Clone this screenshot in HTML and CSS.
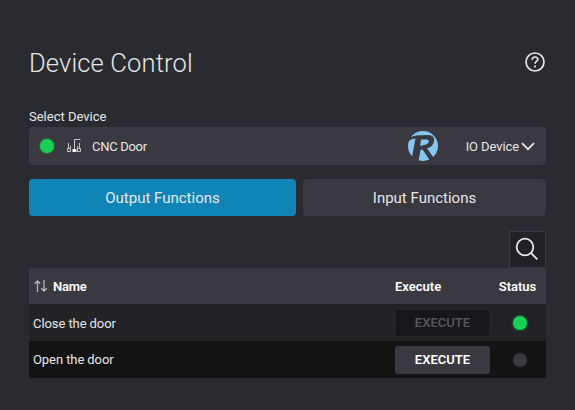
FILE: index.html
```html
<!DOCTYPE html>
<html lang="en">
<head>
<meta charset="utf-8">
<title>Device Control</title>
<link rel="stylesheet" href="styles.css">
</head>
<body>
<main class="panel">
  <header class="panel-head">
    <h1 class="title">Device Control</h1>
    <svg class="help" viewBox="0 0 20 20"><circle cx="10" cy="10" r="9"/><path d="M7.2 7.7c0-3.6 5.6-3.5 5.6-.2 0 2-2.8 1.9-2.8 4.2M10 13.6v1.8"/></svg>
  </header>
  <div class="label">Select Device</div>
  <div class="select">
    <span class="dot on"></span>
    <svg class="device-icon" viewBox="0 0 14 14"><path d="M13.5 .5H7.500v10"/><path d="M1.500 4v5M3.500 7v2M10.500 7v2M12.500 4v5"/><path d="M.5 9.500v3h3v-3zM10.500 9.500v3h3v-3z"/><path class="fill" d="M5.500 10h4v3h-4z"/></svg>
    <span class="text device">CNC Door</span>
    <svg class="logo" viewBox="0 0 30 30"><circle class="disc" cx="15" cy="15" r="15"/><path class="cut" d="M0 8Q3 5 8 4.500L20 4C26 4 27 8 25.500 12Q24 16 19 17.500L26 27 22 29.500 14.500 18.500 12.500 19 10.500 30 4 26 7.500 7.500Q3 7.500 0 11z"/><path class="disc" d="M13 8.500H19C21.500 8.500 21.500 12.500 18 13.500L12.200 15z"/></svg>
    <span class="text type">IO Device</span>
    <svg class="chevron" viewBox="0 0 14 9"><path d="M1 1.200l6 6 6-6"/></svg>
  </div>
  <nav class="tabs">
    <button class="tab active">Output Functions</button>
    <button class="tab">Input Functions</button>
  </nav>
  <div class="tools"><button class="search"><svg viewBox="0 0 24 24"><circle cx="10" cy="10" r="8.300"/><path d="M16 16l6.300 6.300"/></svg></button></div>
  <section class="table">
    <div class="row head">
      <div class="name"><svg class="sort" viewBox="0 0 14 12"><path d="M3.500 12V1M.7 3.800L3.500 1l2.800 2.800M10 0v11M7.200 8.200L10 11l2.800-2.800"/></svg><span class="text heading">Name</span></div>
      <div class="exec"><span class="text">Execute</span></div>
      <div class="status"><span class="text">Status</span></div>
    </div>
    <div class="row">
      <div class="name"><span class="text entry">Close the door</span></div>
      <div class="exec"><button class="run disabled" disabled>EXECUTE</button></div>
      <div class="status"><span class="dot on"></span></div>
    </div>
    <div class="row alt">
      <div class="name"><span class="text entry">Open the door</span></div>
      <div class="exec"><button class="run">EXECUTE</button></div>
      <div class="status"><span class="dot"></span></div>
    </div>
  </section>
</main>
</body>
</html>
```

FILE: styles.css
```css
* { box-sizing: border-box; }
body { margin: 0; background: #2a2b30; color: #e6e6e8; font: 13px/20px Roboto, "Liberation Sans", sans-serif; }
button { border: 0; margin: 0; padding: 0; color: inherit; font: inherit; }
svg { flex: none; fill: none; stroke: #e6e6e8; }
.panel { height: 410px; padding: 43px 29px 0; border-bottom: 1px solid #30272e; }
.panel-head { height: 40px; display: flex; align-items: center; justify-content: space-between; }
.title { margin: 0; font-size: 25.5px; font-weight: 300; line-height: 40px; letter-spacing: .15px; }
.help { width: 20px; height: 20px; margin: -2px 1px 0 0; stroke-width: 1.7; }
.label { height: 44px; padding-top: 24px; }
.text { white-space: nowrap; padding-top: 2px; }
.device { letter-spacing: -.3px; }
.type { letter-spacing: -.1px; }
.heading { letter-spacing: -.25px; }
.entry { letter-spacing: -.08px; }
.alt .text { padding-top: 0; }
.select { height: 38px; display: flex; align-items: center; padding: 0 11px; background: #3a3840; border-radius: 4px; }
.dot { flex: none; width: 14px; height: 14px; border-radius: 50%; background: #3a3840; }
.dot.on { background: #18d052; box-shadow: 0 0 3px #18d052aa; }
.device-icon { width: 14px; height: 14px; margin: 0 11px 0 13px; stroke: #c9c8cc; stroke-width: 1; }
.device-icon .fill { fill: #fff; stroke: none; }
.logo { width: 30px; height: 30px; margin: 0 28px 0 auto; stroke: none; }
.disc { fill: #86c7f1; }
.cut { fill: #3a3840; }
.chevron { width: 14px; height: 9px; margin-left: 2px; stroke-width: 1.8; }
.tabs { display: flex; gap: 7px; margin-top: 14px; }
.tab { width: 243px; height: 37px; border-radius: 4px; background: #3a3840; font-size: 15px; padding-top: 1px; }
.tab.active { width: 267px; background: #1085b5; }
.tools { height: 52px; padding-top: 15px; display: flex; justify-content: flex-end; }
.search { width: 37px; height: 37px; display: grid; place-items: center; background: #222126; border: 1px solid #3a3840; }
.search svg { width: 24px; height: 24px; margin: -2px 2px 0 0; stroke-width: 1.8; }
.row { height: 37px; display: grid; grid-template-columns: 1fr 124px 53px; align-items: center; padding-left: 4px; background: #232227; }
.row.head { height: 36px; background: #3a3840; font-weight: 600; color: #fff; }
.row.alt { background: #131313; }
.name, .exec, .status { display: flex; align-items: center; }
.exec { padding-left: 26px; }
.status { justify-content: center; }
.head .status { padding-right: 4px; }
.sort { width: 14px; height: 12px; margin: 0 5px 0 1px; stroke: #b5b4b9; stroke-width: 1.3; }
.run { width: 95px; height: 28px; border-radius: 3px; background: #3a3840; color: #fff; font-weight: 600; }
.run.disabled { width: 93px; height: 26px; margin-left: 1px; background: #17161a; color: #56555a; }
```
